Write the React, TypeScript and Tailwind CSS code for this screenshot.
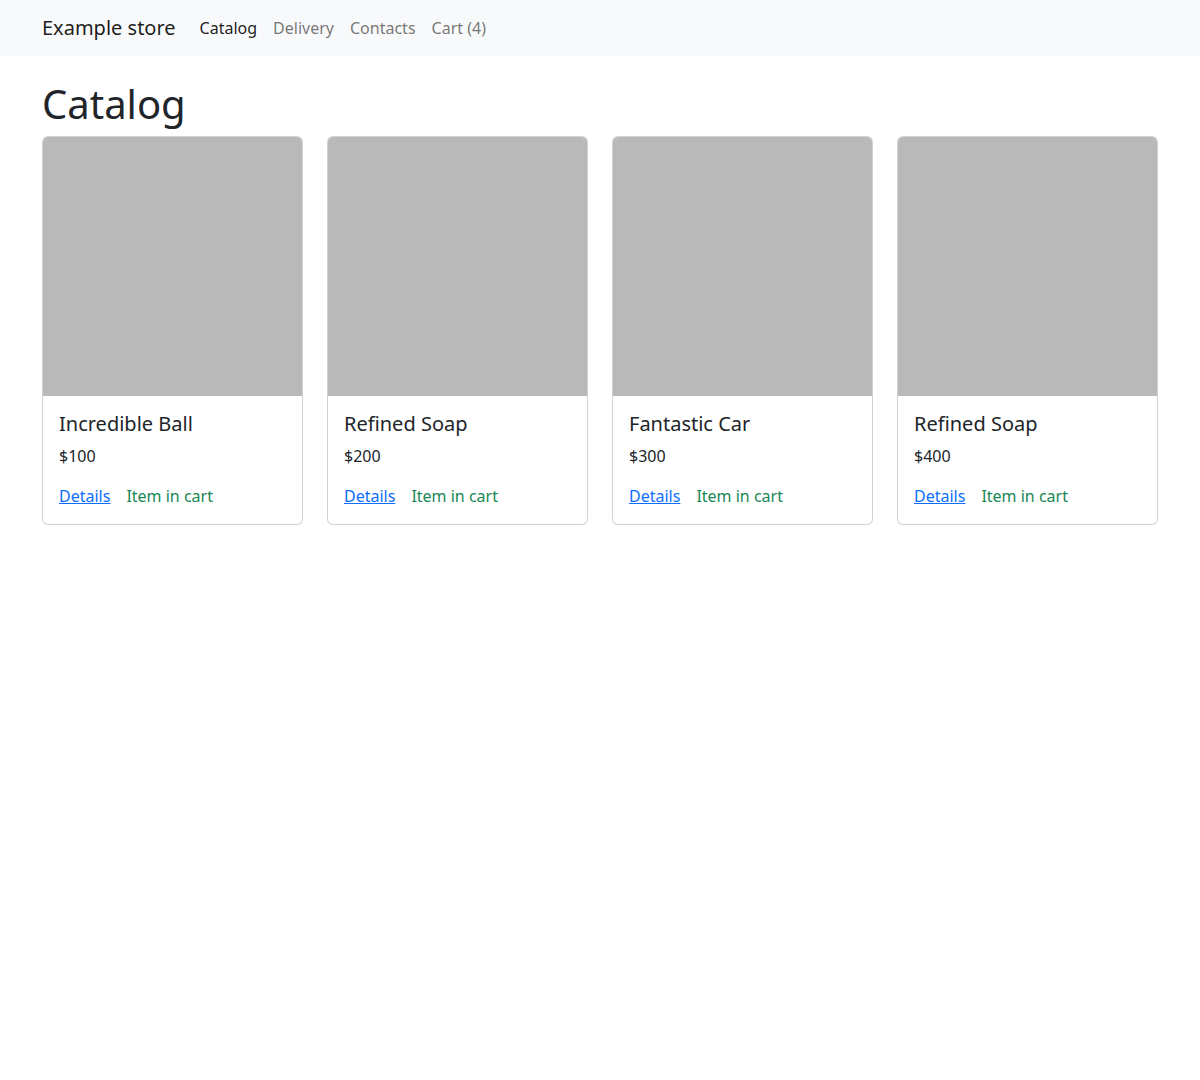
import React from 'react'

const products = [
  { id: 1, title: 'Incredible Ball', price: 100 },
  { id: 2, title: 'Refined Soap', price: 200 },
  { id: 3, title: 'Fantastic Car', price: 300 },
  { id: 4, title: 'Refined Soap', price: 400 }
]

const navLinks = [
  { label: 'Catalog', active: true },
  { label: 'Delivery', active: false },
  { label: 'Contacts', active: false },
  { label: 'Cart (4)', active: false }
]

function ProductCard({ title, price }: { title: string; price: number }) {
  return (
    <div className="flex flex-col border border-[rgba(0,0,0,0.175)] rounded-[6px] bg-white">
      <div className="h-[259px] bg-[#b9b9b9] rounded-t-[5px]" />
      <div className="p-4">
        <h5 className="text-[20px] leading-[24px] mb-2 font-normal">{title}</h5>
        <p className="text-[16px] leading-[24px] mb-4">${price}</p>
        <div className="flex flex-row text-[16px] leading-[24px]">
          <a href="#" className="text-[#0d6efd] underline">
            Details
          </a>
          <span className="ml-4 text-[#198754]">Item in cart</span>
        </div>
      </div>
    </div>
  )
}

export default function App() {
  return (
    <div className="min-h-[1080px] bg-white text-[#212529]" style={{ fontFamily: '"Noto Sans", sans-serif' }}>
      <nav className="bg-[#f8f9fa] h-[56px] flex items-center">
        <div className="w-[1140px] mx-auto px-3 flex flex-row items-center">
          <a href="#" className="text-[20px] leading-[30px] py-[5px] mr-4 text-[rgba(0,0,0,0.9)]">
            Example store
          </a>
          <div className="flex flex-row">
            {navLinks.map((link, idx) => (
              <a
                key={idx}
                href="#"
                className={
                  'px-2 py-2 text-[16px] leading-[24px] ' +
                  (link.active ? 'text-[rgba(0,0,0,0.9)]' : 'text-[rgba(0,0,0,0.55)]')
                }
              >
                {link.label}
              </a>
            ))}
          </div>
        </div>
      </nav>

      <div className="w-[1140px] mx-auto px-3">
        <h1 className="text-[40px] leading-[48px] mt-6 mb-2 font-normal">Catalog</h1>
        <div className="grid grid-cols-4 gap-6">
          {products.map((p) => (
            <ProductCard key={p.id} title={p.title} price={p.price} />
          ))}
        </div>
      </div>
    </div>
  )
}
